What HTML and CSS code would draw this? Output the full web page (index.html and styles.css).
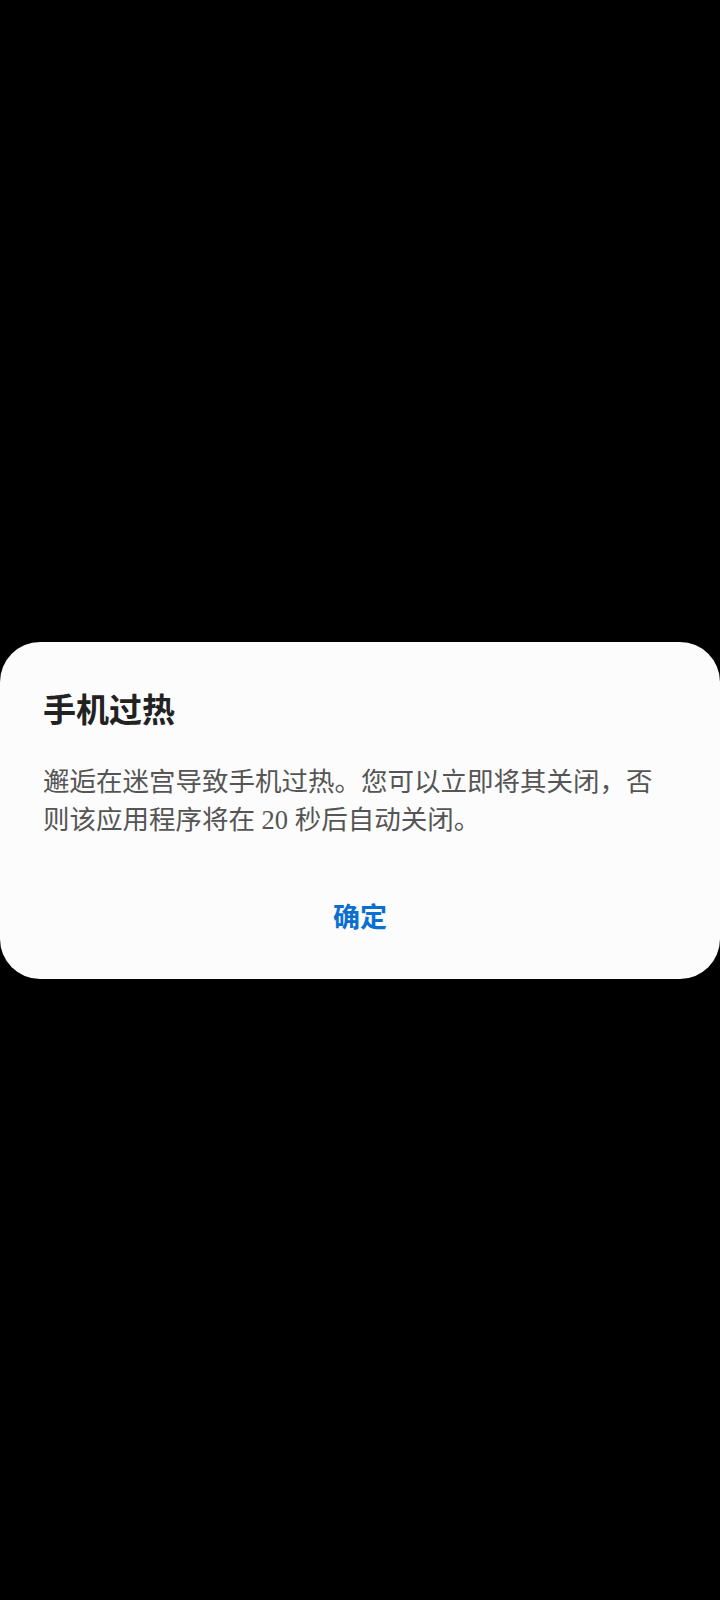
FILE: index.html
```html
<!DOCTYPE html>
<html lang="zh-CN">
<head>
  <meta charset="UTF-8">
  <title>手机过热</title>
  <link rel="stylesheet" href="styles.css">
</head>
<body>
  <!-- Overheat warning dialog -->
  <div class="dialog">
    <h1 class="dialog-title">手机过热</h1>
    <p class="dialog-text">邂逅在迷宫导致手机过热。您可以立即将其关闭，否则该应用程序将在 20 秒后自动关闭。</p>
    <div class="dialog-actions">
      <a href="#" class="dialog-button">确定</a>
    </div>
  </div>
</body>
</html>
```

FILE: styles.css
```css
*, *:before,
*:after {
  box-sizing: border-box;
}

html {
  height: 100%;
  background: #000;
}

body {
  margin: 0;
  height: 100%;
  background: #000;
  font-family: "Noto Sans CJK SC", "Noto Sans", sans-serif;
  display: flex;
  flex-direction: column;
}

.dialog {
  margin-top: 642px;
  height: 337px;
  background: #fcfcfc;
  border-radius: 40px;
  padding: 44px 43px 0;
}

.dialog-title {
  margin: 0;
  font-size: 33px;
  line-height: 44px;
  font-weight: 700;
  color: #222;
}

.dialog-text {
  margin: 33px 0 0;
  max-width: 620px;
  font-family: "Liberation Serif", "Noto Sans CJK SC", serif;
  font-size: 26.5px;
  line-height: 38px;
  color: #555;
}

.dialog-actions {
  margin-top: 57px;
  display: flex;
  justify-content: center;
}

.dialog-button {
  font-size: 27px;
  line-height: 40px;
  font-weight: 700;
  color: #0a6fd0;
  text-decoration: none;
}
```
